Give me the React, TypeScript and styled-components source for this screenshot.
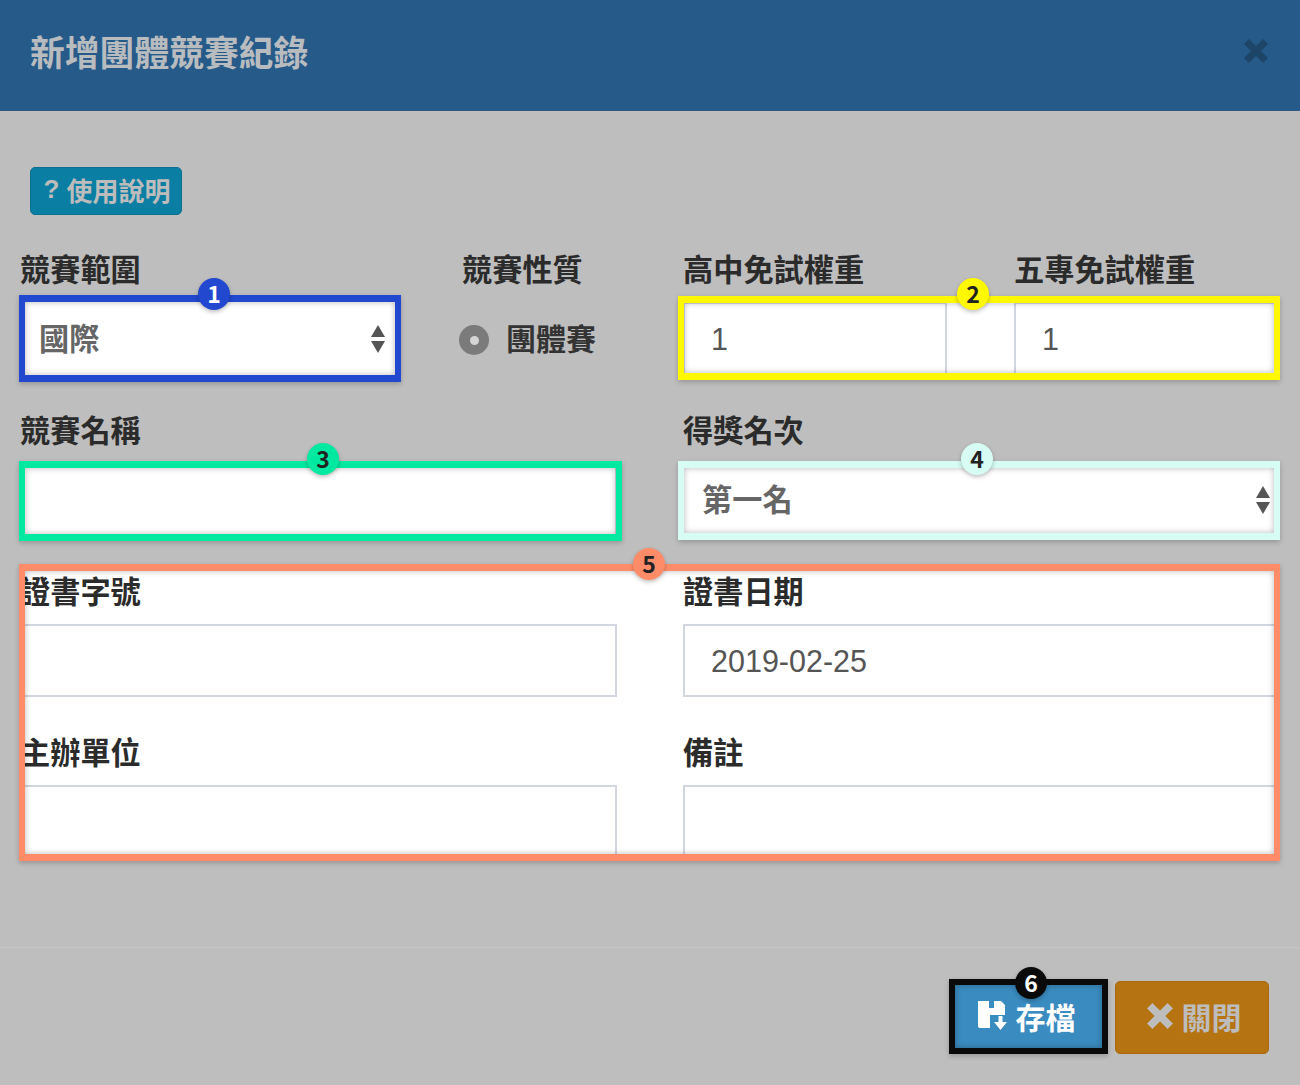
import React from 'react';
import styled, { createGlobalStyle } from 'styled-components';

const Global = createGlobalStyle`
  html, body {
    margin: 0;
    padding: 0;
    background: #bebebe;
  }
  * {
    box-sizing: border-box;
  }
`;

const fontStack = `"Liberation Sans", "Noto Sans CJK TC", sans-serif`;

const Page = styled.div`
  width: 1300px;
  height: 1085px;
  overflow: hidden;
  background: #bebebe;
  font-family: ${fontStack};
`;

const Header = styled.div`
  height: 111px;
  padding: 0 31px 8px 30px;
  background: #265a89;
  border-bottom: 1px solid #2a5b85;
  display: flex;
  align-items: center;
  justify-content: space-between;
`;

const Title = styled.div`
  font-size: 34.8px;
  font-weight: bold;
  color: #b9bcbf;
`;

const Body = styled.div`
  padding: 56px 20px 89px;
`;

const HelpButton = styled.div`
  width: 152px;
  height: 48px;
  margin: 0 0 37px 10px;
  padding: 0 0 3px 2px;
  display: flex;
  align-items: center;
  justify-content: center;
  gap: 7px;
  background: #0a7fa3;
  border: 1px solid #0b6f8e;
  border-radius: 5px;
  color: #bcbcbc;
  font-size: 26px;
  font-weight: bold;
`;

const Row = styled.div<{ $last?: boolean }>`
  display: grid;
  grid-template-columns: 597px 597px;
  column-gap: 66px;
  margin-bottom: ${(p) => (p.$last ? 0 : 38)}px;
`;

const SplitLeft = styled.div`
  display: grid;
  grid-template-columns: 375px 1fr;
  column-gap: 67px;
`;

const Label = styled.div`
  height: 36px;
  line-height: 38px;
  margin-bottom: 14px;
  font-size: 30.2px;
  font-weight: bold;
  color: #2b2b2b;
  white-space: nowrap;
`;

const WeightLabels = styled.div`
  display: grid;
  grid-template-columns: 264px 1fr;
  column-gap: 67px;
`;

const Spot = styled.div`
  position: relative;
  background: #fff;
`;

const Frame = styled.div<{ $color: string; $inset: string; $bx?: number; $by?: number }>`
  position: absolute;
  inset: ${(p) => p.$inset};
  border-style: solid;
  border-color: ${(p) => p.$color};
  border-width: ${(p) => `${p.$by ?? 7}px ${p.$bx ?? 6}px`};
  box-shadow: inset 0 0 6px rgba(0, 0, 0, 0.28), 0 2px 5px rgba(0, 0, 0, 0.22);
  pointer-events: none;
`;

const Badge = styled.div<{ $color: string; $fg?: string; $left: number; $top: number }>`
  position: absolute;
  left: ${(p) => p.$left}px;
  top: ${(p) => p.$top}px;
  width: 32px;
  height: 32px;
  border-radius: 50%;
  background: ${(p) => p.$color};
  color: ${(p) => p.$fg ?? '#fff'};
  font-family: "Noto Sans CJK TC", sans-serif;
  font-size: 23px;
  font-weight: bold;
  line-height: 30px;
  text-align: center;
  box-shadow: 0 2px 4px rgba(0, 0, 0, 0.25);
`;

const SelectBox = styled.div`
  height: 73px;
  padding: 0 10px 0 19px;
  display: flex;
  align-items: center;
  justify-content: space-between;
  background: #fff;
  font-size: 30.2px;
  font-weight: bold;
  color: #666;
`;

const SelectValue = styled.span`
  padding-bottom: 3px;
`;

const Arrows = styled.div`
  display: flex;
  flex-direction: column;
  gap: 4px;
  &:before,
  &:after {
    content: '';
    width: 0;
    height: 0;
    border-left: 7px solid transparent;
    border-right: 7px solid transparent;
  }
  &:before {
    border-bottom: 12px solid #555;
  }
  &:after {
    border-top: 12px solid #555;
  }
`;

const Radio = styled.div`
  height: 73px;
  margin-left: -3px;
  display: flex;
  align-items: center;
  gap: 17px;
  font-size: 30px;
  font-weight: bold;
  color: #333;
`;

const RadioText = styled.span`
  padding-bottom: 4px;
`;

const RadioDot = styled.span`
  width: 30px;
  height: 30px;
  margin-top: 3px;
  border-radius: 50%;
  background: #7b7b7b;
  display: flex;
  align-items: center;
  justify-content: center;
  &:after {
    content: '';
    width: 9px;
    height: 9px;
    border-radius: 50%;
    background: #d5d5d5;
  }
`;

const TextInput = styled.input`
  display: block;
  width: 100%;
  height: 73px;
  padding: 2px 26px 0;
  background: #fff;
  border: 2px solid #d2d6e0;
  border-radius: 0;
  outline: none;
  font-family: ${fontStack};
  font-size: 30.5px;
  color: #555;
`;

const WeightInputs = styled.div`
  display: grid;
  grid-template-columns: 264px 1fr;
  column-gap: 67px;
`;

const CertSection = styled.div`
  position: relative;
  padding-top: 8px;
  background: #fff;
  margin-top: -8px;
`;

const Footer = styled.div`
  height: 138px;
  padding: 33px 31px 0 0;
  border-top: 1px solid #c9c9c9;
  display: flex;
  justify-content: flex-end;
  gap: 10px;
`;

const ActionButton = styled.div<{ $bg: string; $line: string; $fg: string; $shift: number }>`
  position: relative;
  width: 154px;
  height: 73px;
  padding-left: ${(p) => Math.max(p.$shift, 0)}px;
  padding-right: ${(p) => Math.max(-p.$shift, 0)}px;
  padding-bottom: 4px;
  display: flex;
  align-items: center;
  justify-content: center;
  gap: 8px;
  background: ${(p) => p.$bg};
  border: 1px solid ${(p) => p.$line};
  border-radius: 5px;
  color: ${(p) => p.$fg};
  font-size: 30px;
  font-weight: bold;
`;

const CrossIcon = ({ size, color }: { size: number; color: string }) => (
  <svg width={size} height={size} viewBox="0 0 24 24">
    <path d="M5.5 5.5 L18.5 18.5 M18.5 5.5 L5.5 18.5" stroke={color} strokeWidth="6.5" strokeLinecap="square" fill="none" />
  </svg>
);

const SaveIcon = () => (
  <svg width="30" height="29" viewBox="0 0 30 29" fill="#fff">
    <path d="M0 0 H11 V7 H16 V0 H23 L27 4 V14 H12 V27 H2 Q0 27 0 25 Z" />
    <path d="M20.5 15 H24.5 V21 H29 L22.5 29 L16 21 H20.5 Z" />
  </svg>
);

function App() {
  return (
    <Page>
      <Global />
      <Header>
        <Title>新增團體競賽紀錄</Title>
        <CrossIcon size={26} color="#1c4568" />
      </Header>
      <Body>
        <HelpButton>
          <span>?</span>
          <span>使用說明</span>
        </HelpButton>
        <Row>
          <SplitLeft>
            <div>
              <Label>競賽範圍</Label>
              <Spot>
                <SelectBox>
                  <SelectValue>國際</SelectValue>
                  <Arrows />
                </SelectBox>
                <Frame $color="#2148cf" $inset="-7px -6px -7px -1px" />
                <Badge $color="#2148cf" $left={178} $top={-24}>1</Badge>
              </Spot>
            </div>
            <div>
              <Label>競賽性質</Label>
              <Radio>
                <RadioDot />
                <RadioText>團體賽</RadioText>
              </Radio>
            </div>
          </SplitLeft>
          <div>
            <WeightLabels>
              <Label>高中免試權重</Label>
              <Label>五專免試權重</Label>
            </WeightLabels>
            <Spot>
              <WeightInputs>
                <TextInput readOnly value="1" />
                <TextInput readOnly value="1" />
              </WeightInputs>
              <Frame $color="#fff800" $inset="-6px 0 -5px -5px" />
              <Badge $color="#fff800" $fg="#222" $left={274} $top={-24}>2</Badge>
            </Spot>
          </div>
        </Row>
        <Row>
          <div>
            <Label>競賽名稱</Label>
            <Spot>
              <TextInput readOnly value="" />
              <Frame $color="#00e9a0" $inset="-2px -5px -5px -1px" />
              <Badge $color="#00e9a0" $fg="#222" $left={287} $top={-20}>3</Badge>
            </Spot>
          </div>
          <div>
            <Label>得獎名次</Label>
            <Spot>
              <SelectBox>
                <SelectValue>第一名</SelectValue>
                <Arrows />
              </SelectBox>
              <Frame $color="#d6fcf3" $inset="-2px 0 -4px -5px" />
              <Badge $color="#d6fcf3" $fg="#222" $left={278} $top={-20}>4</Badge>
            </Spot>
          </div>
        </Row>
        <CertSection>
          <Row>
            <div>
              <Label>證書字號</Label>
              <TextInput readOnly value="" />
            </div>
            <div>
              <Label>證書日期</Label>
              <TextInput readOnly value="2019-02-25" />
            </div>
          </Row>
          <Row $last>
            <div>
              <Label>主辦單位</Label>
              <TextInput readOnly value="" />
            </div>
            <div>
              <Label>備註</Label>
              <TextInput readOnly value="" />
            </div>
          </Row>
          <Frame $color="#ff8c69" $inset="-2px 0 -3px -1px" />
          <Badge $color="#ff8c69" $fg="#222" $left={613} $top={-18}>5</Badge>
        </CertSection>
      </Body>
      <Footer>
        <ActionButton $bg="#3a8bbf" $line="#2f7aa9" $fg="#fff" $shift={-3}>
          <SaveIcon />
          存檔
          <Frame $color="#0a0a0a" $inset="-3px -4px -1px -3px" $bx={6} $by={6} />
          <Badge $color="#0a0a0a" $left={63} $top={-15}>6</Badge>
        </ActionButton>
        <ActionButton $bg="#b57311" $line="#a96a10" $fg="#bdbdbd" $shift={3}>
          <CrossIcon size={28} color="#bdbdbd" />
          關閉
        </ActionButton>
      </Footer>
    </Page>
  );
}

export default App;
